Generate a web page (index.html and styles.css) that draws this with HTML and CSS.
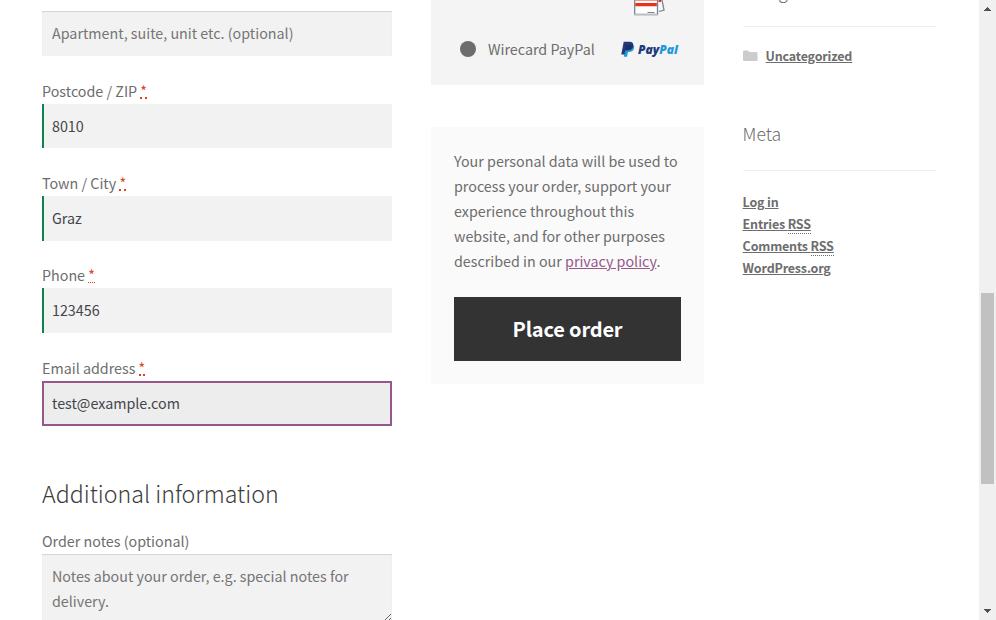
FILE: index.html
```html
<!DOCTYPE html>
<html lang="en">
<head>
<meta charset="utf-8">
<title>Checkout</title>
<link rel="stylesheet" href="styles.css">
</head>
<body>
<div class="page">
  <main class="billing">
    <div class="field"><input class="input optional" type="text" placeholder="Apartment, suite, unit etc. (optional)"></div>
    <div class="field postcode"><label>Postcode / ZIP <abbr class="required">*</abbr></label><input class="input valid" type="text" value="8010"></div>
    <div class="field"><label>Town / City <abbr class="required">*</abbr></label><input class="input valid" type="text" value="Graz"></div>
    <div class="field phone"><label>Phone <abbr class="required">*</abbr></label><input class="input valid" type="text" value="123456"></div>
    <div class="field"><label>Email address <abbr class="required">*</abbr></label><input class="input active" type="text" value="test@example.com"></div>
    <h3>Additional information</h3>
    <div class="field"><label>Order notes (optional)</label><textarea class="input notes" placeholder="Notes about your order, e.g. special notes for delivery."></textarea></div>
  </main>

  <section class="payment">
    <div class="methods">
      <svg class="cards" width="31" height="16" viewBox="0 0 31 16">
        <path d="M25 0h3l2 10-5 1.500" fill="#f6f7f7" stroke="#778690" stroke-width="1.3"/>
        <path d="M24.500 0h2.500v2h-2.500z" fill="#ea3016"/>
        <path d="M.7-2h22.800v16.500H.7z" fill="#fff" stroke="#778690" stroke-width="1.3"/>
        <path d="M0 14.600h24" stroke="#bcc4c8"/>
        <path d="M1.300 3h21.500v3.300H1.300zM1.300 0h21.500v.6H1.300z" fill="#ea3016"/>
        <path d="M13.500 12.500H20.500" stroke="#778690"/>
      </svg>
      <div class="method">
        <span class="radio"></span>
        <span class="method-name">Wirecard PayPal</span>
        <svg class="paypal" width="59" height="17" viewBox="0 0 59 17">
          <path d="M4.500 3h6.300q3 1 2.200 4.200-.8 3.800-5 3.800H7l-1 4.800H2.800z" fill="#1e9bd7"/>
          <path d="M2.700.7h5.800q4.300.2 3.700 4-.8 4.600-5.600 4.600H4.400l-.9 4.200H.3z" fill="#213a7c"/>
          <path d="M5 4q4-.6 7 .5-.7 4.900-5.600 4.800H4z" fill="#222d65"/>
          <text x="17" y="13.200" class="logo-text" textLength="40" lengthAdjust="spacingAndGlyphs"><tspan fill="#213a7c">Pay</tspan><tspan fill="#1e9bd7">Pal</tspan></text>
        </svg>
      </div>
    </div>
    <div class="order">
      <p>Your personal data will be used to process your order, support your experience throughout this website, and for other purposes described in our <a href="#">privacy policy</a>.</p>
      <button type="button">Place order</button>
    </div>
  </section>

  <aside class="sidebar">
    <h4 class="cut">Categories</h4>
    <ul class="categories">
      <li><svg width="15" height="12" viewBox="0 0 15 12"><path d="M0 1.500Q0 .5 1 .5h4l1.500 1.500H13q1.500 0 1.500 1.200V10q0 1-1 1H1q-1 0-1-1z" fill="#ccc"/></svg><a href="#">Uncategorized</a></li>
    </ul>
    <h4>Meta</h4>
    <ul class="meta">
      <li><a href="#">Log in</a></li>
      <li><a href="#">Entries <abbr>RSS</abbr></a></li>
      <li><a href="#">Comments <abbr>RSS</abbr></a></li>
      <li><a href="#">WordPress.org</a></li>
    </ul>
  </aside>

  <div class="scrollbar">
    <svg width="7" height="4" viewBox="0 0 7 4" shape-rendering="crispEdges"><path d="M3 0h1v1h1v1h1v1h1v1H0V3h1V2h1V1h1z" fill="#505050"/></svg>
    <div class="thumb"></div>
    <svg width="7" height="4" viewBox="0 0 7 4" shape-rendering="crispEdges"><path d="M0 0h7v1H6v1H5v1H4v1H3V3H2V2H1V1H0z" fill="#505050"/></svg>
  </div>
</div>
</body>
</html>
```
FILE: styles.css
```css
* { box-sizing: border-box; }
body {
  margin: 0;
  height: 620px;
  overflow: hidden;
  background: #fff;
  color: #6d6d6d;
  font: 14.3px/25px "Source Sans Pro", "Noto Sans CJK SC", sans-serif;
}
.page {
  display: grid;
  grid-template-columns: 350px 273px 193px 17px;
  column-gap: 39px;
  height: 620px;
  padding-left: 42px;
  overflow: hidden;
}
.billing { padding-top: 11px; }
.field { margin-bottom: 22px; }
.field label { display: block; height: 26px; line-height: 26px; }
abbr { text-decoration: none; }
.required { color: #e2401c; border-bottom: 2px dotted #e2401c; line-height: 1; display: inline-block; height: 15px; }
.input {
  display: block;
  width: 350px;
  height: 45px;
  margin: 0;
  padding: 0 10px 2px;
  border: 0;
  border-radius: 0;
  outline: 0;
  background: #f2f2f2;
  color: #43454b;
  font: inherit;
}
.input::placeholder { color: #757575; opacity: 1; }
.optional, .notes { box-shadow: inset 0 1px 1px rgba(0,0,0,.125); }
.valid { border-left: 2px solid #0f834d; padding-left: 8px; }
.active { background: #ededed; border: 2px solid #96588a; padding: 0 8px 2px; }
.postcode .input { height: 44px; padding-bottom: 1px; }
.phone label { height: 25px; line-height: 24px; }
.phone .required { border-bottom-width: 1px; }
.notes { height: 68px; padding: 9px 10px; resize: vertical; overflow: hidden; }
h3 { margin: 51px 0 19px; font-size: 23.2px; line-height: 32px; font-weight: 200; color: #3c3c3c; }
.methods { height: 85px; background: #f4f4f4; padding: 0 22px 0 29px; }
.cards { display: block; margin-left: 174px; }
.method { display: flex; align-items: center; height: 25px; margin-top: 20px; }
.radio { width: 16px; height: 16px; border-radius: 50%; background: #6d6d6d; }
.method-name { margin-left: 12px; width: 132.500px; }
.paypal { margin-top: 2px; }
.logo-text { font: italic 800 11.500px "Open Sans", sans-serif; }
.order { height: 257px; margin-top: 42px; padding: 21px 23px; background: #fafafa; }
.order p { margin: 0 0 24px; }
.order a { color: #96588a; text-decoration: underline; }
button {
  display: block;
  width: 227px;
  height: 64px;
  border: 0;
  padding: 0;
  background: #333;
  color: #fff;
  font: 700 20px/30px "Source Sans Pro", "Noto Sans CJK SC", sans-serif;
  letter-spacing: -.18px;
}
.sidebar { margin-left: -.4px; }
h4 { margin: 0; height: 57px; border-bottom: 1px solid #f0f0f0; font-size: 17.6px; line-height: 40px; font-weight: 300; color: #6d6d6d; }
.cut { height: 56px; margin-top: -29px; }
ul { margin: 0; padding: 0; list-style: none; font-size: 12.500px; line-height: 22px; font-weight: 600; letter-spacing: -.18px; }
li { height: 22px; display: block; }
.categories { padding-top: 18px; height: 87px; }
.categories li { display: flex; align-items: center; gap: 8px; }
.sidebar a { color: #6d6d6d; text-decoration: underline; }
.meta { padding-top: 20px; }
.meta abbr { border-bottom: 1px dotted #6d6d6d; }
.scrollbar { background: #f0f0f0; display: flex; flex-direction: column; align-items: center; padding: 7px 0; height: 620px; margin-left: 4px; width: 17px; }
.thumb { width: 13px; height: 191px; margin-top: 282px; margin-bottom: auto; background: #c1c1c1; }
```
